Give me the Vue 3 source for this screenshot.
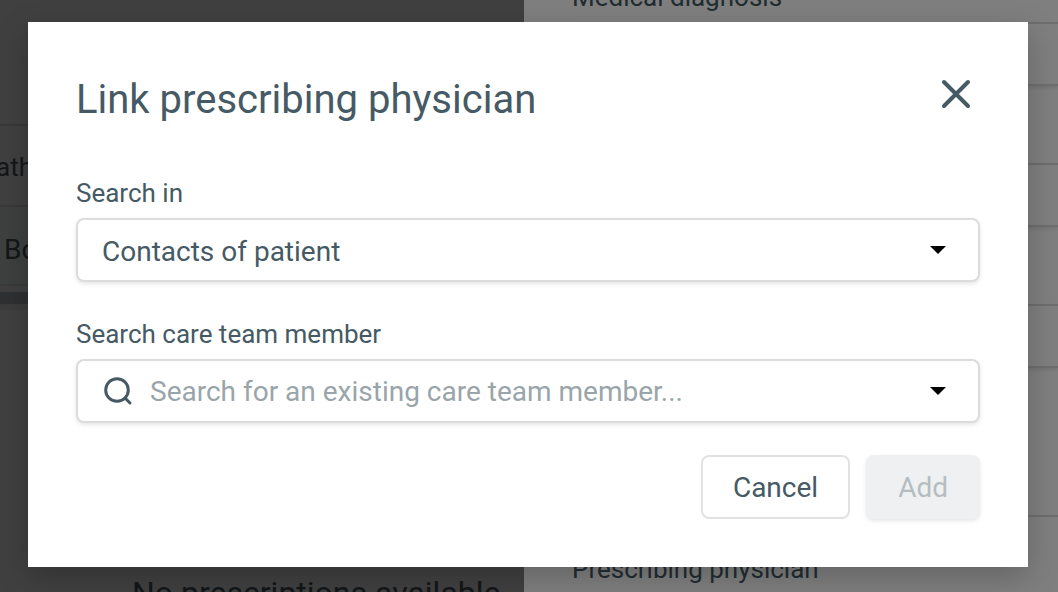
<script setup>
import { ref, computed } from 'vue';

const source = ref('contacts');
const search = ref('');

const canAdd = computed(() => search.value.trim().length > 0);
</script>

<template>
  <div class="page">
    <div class="page-content">
      <section class="medication">
        <div class="row">ath</div>
        <div class="row selected">Bo</div>
        <div class="scrollbar"></div>
        <p class="empty">No prescriptions available</p>
      </section>

      <section class="details">
        <div class="detail-label">Medical diagnosis</div>
        <div class="detail-box"></div>
        <div class="detail-box"></div>
        <div class="detail-box"></div>
        <div class="divider"></div>
        <div class="detail-label">Prescribing physician</div>
      </section>
    </div>

    <div class="overlay">
      <form class="modal" role="dialog" aria-labelledby="modal-title" @submit.prevent>
        <header class="modal-header">
          <h1 id="modal-title" class="modal-title">Link prescribing physician</h1>
          <button type="button" class="close-button" aria-label="Close">
            <svg width="32" height="32" viewBox="0 0 32 32">
              <path d="M4 4L28 28M28 4L4 28" />
            </svg>
          </button>
        </header>

        <div class="field">
          <label for="source" class="label">Search in</label>
          <div class="control">
            <select id="source" v-model="source" class="select">
              <option value="contacts">Contacts of patient</option>
            </select>
            <svg class="arrow" width="16" height="8" viewBox="0 0 16 8">
              <path d="M0 0H16L8 8Z" />
            </svg>
          </div>
        </div>

        <div class="field">
          <label for="member" class="label">Search care team member</label>
          <div class="control">
            <svg class="search-icon" width="32" height="32" viewBox="0 0 32 32">
              <circle cx="15" cy="15" r="11.3" />
              <path d="M23 23L28 28" />
            </svg>
            <input
              id="member"
              v-model="search"
              type="text"
              class="input"
              placeholder="Search for an existing care team member..."
            />
            <svg class="arrow" width="16" height="8" viewBox="0 0 16 8">
              <path d="M0 0H16L8 8Z" />
            </svg>
          </div>
        </div>

        <footer class="actions">
          <button type="button" class="button">Cancel</button>
          <button type="submit" class="button primary" :disabled="!canAdd">Add</button>
        </footer>
      </form>
    </div>
  </div>
</template>

<style>
body {
  margin: 0;
}
</style>

<style scoped>
.page {
  position: relative;
  height: 100vh;
  overflow: hidden;
  font-family: Roboto, sans-serif;
  color: #455a64;
}

.page * {
  box-sizing: border-box;
}

/* Page behind the dialog */
.page-content {
  display: grid;
  grid-template-columns: 524fr 534fr;
  height: 100%;
}

.medication {
  padding-top: 124px;
  background: #808080;
  color: #262e33;
  overflow: hidden;
}

.row {
  height: 81px;
  border-top: 2px solid #727272;
  font-size: 26px;
  line-height: 82px;
  text-indent: -4px;
}

.row.selected {
  background: #7a807d;
  border-bottom: 2px solid #747474;
  font-size: 28px;
  line-height: 86px;
  text-indent: 4px;
}

.scrollbar {
  height: 18px;
  margin-top: 6px;
  background: #5c6064;
  border-bottom: 6px solid #787878;
}

.empty {
  margin: 264px 0 0;
  padding-left: 132px;
  font-size: 32px;
  line-height: 38px;
  white-space: nowrap;
}

.details {
  background: #fff;
  overflow: hidden;
}

.detail-label {
  padding-left: 48px;
  font-size: 26px;
  line-height: 34px;
}

.detail-label:first-child {
  margin: -20px 0 8px;
}

.detail-box {
  height: 64px;
  margin: 0 0 77px 48px;
  border: 2px solid #dcdcdc;
  border-right: none;
  box-shadow: 0 2px 4px rgba(0, 0, 0, 0.1);
}

.divider {
  height: 2px;
  margin: 147px 0 35px;
  background: #dcdcdc;
}

/* Dialog */
.overlay {
  position: absolute;
  inset: 0;
  padding: 22px 30px 25px 28px;
  background: rgba(0, 0, 0, 0.5);
}

.modal {
  padding: 48px;
  background: #fff;
  box-shadow: 0 10px 30px rgba(0, 0, 0, 0.22);
}

.modal-header {
  display: flex;
  align-items: flex-start;
  justify-content: space-between;
  margin-bottom: 46px;
}

.modal-title {
  margin: 0;
  font-size: 40px;
  font-weight: 400;
  line-height: 60px;
}

.close-button {
  display: flex;
  align-items: center;
  justify-content: center;
  width: 48px;
  height: 48px;
  padding: 0;
  border: none;
  background: none;
  cursor: pointer;
}

.close-button svg,
.search-icon {
  fill: none;
  stroke: #455a64;
  stroke-width: 4;
  stroke-linecap: round;
}

.field + .field {
  margin-top: 35px;
}

.label {
  display: block;
  margin-bottom: 8px;
  font-size: 26px;
  line-height: 34px;
}

.control {
  position: relative;
  display: flex;
  align-items: center;
  height: 64px;
  padding-left: 24px;
  border: 2px solid #dcdcdc;
  border-radius: 8px;
  background: #fff;
  box-shadow: 0 2px 4px rgba(0, 0, 0, 0.1);
}

.select,
.input {
  flex: 1;
  min-width: 0;
  height: 100%;
  padding: 0 64px 0 0;
  border: none;
  outline: none;
  background: none;
  color: #455a64;
  font-family: inherit;
  font-size: 28px;
  appearance: none;
}

.select {
  padding-top: 2px;
}

.input::placeholder {
  color: #9aa5aa;
  opacity: 1;
}

.search-icon {
  flex: none;
  margin-right: 16px;
  stroke-width: 3;
}

.arrow {
  position: absolute;
  top: 26px;
  right: 32px;
  pointer-events: none;
}

.actions {
  display: flex;
  justify-content: flex-end;
  gap: 16px;
  margin-top: 32px;
}

.button {
  height: 64px;
  padding: 0 30px;
  border: 2px solid #e0e2e3;
  border-radius: 8px;
  background: #fff;
  color: #455a64;
  font-family: inherit;
  font-size: 28px;
  cursor: pointer;
}

.button.primary {
  border-color: #455a64;
  background: #455a64;
  color: #fff;
}

.button.primary:disabled {
  border-color: #eff0f2;
  background: #eff0f2;
  color: #b5bdc1;
  box-shadow: 0 2px 4px rgba(0, 0, 0, 0.1);
  cursor: default;
}
</style>
